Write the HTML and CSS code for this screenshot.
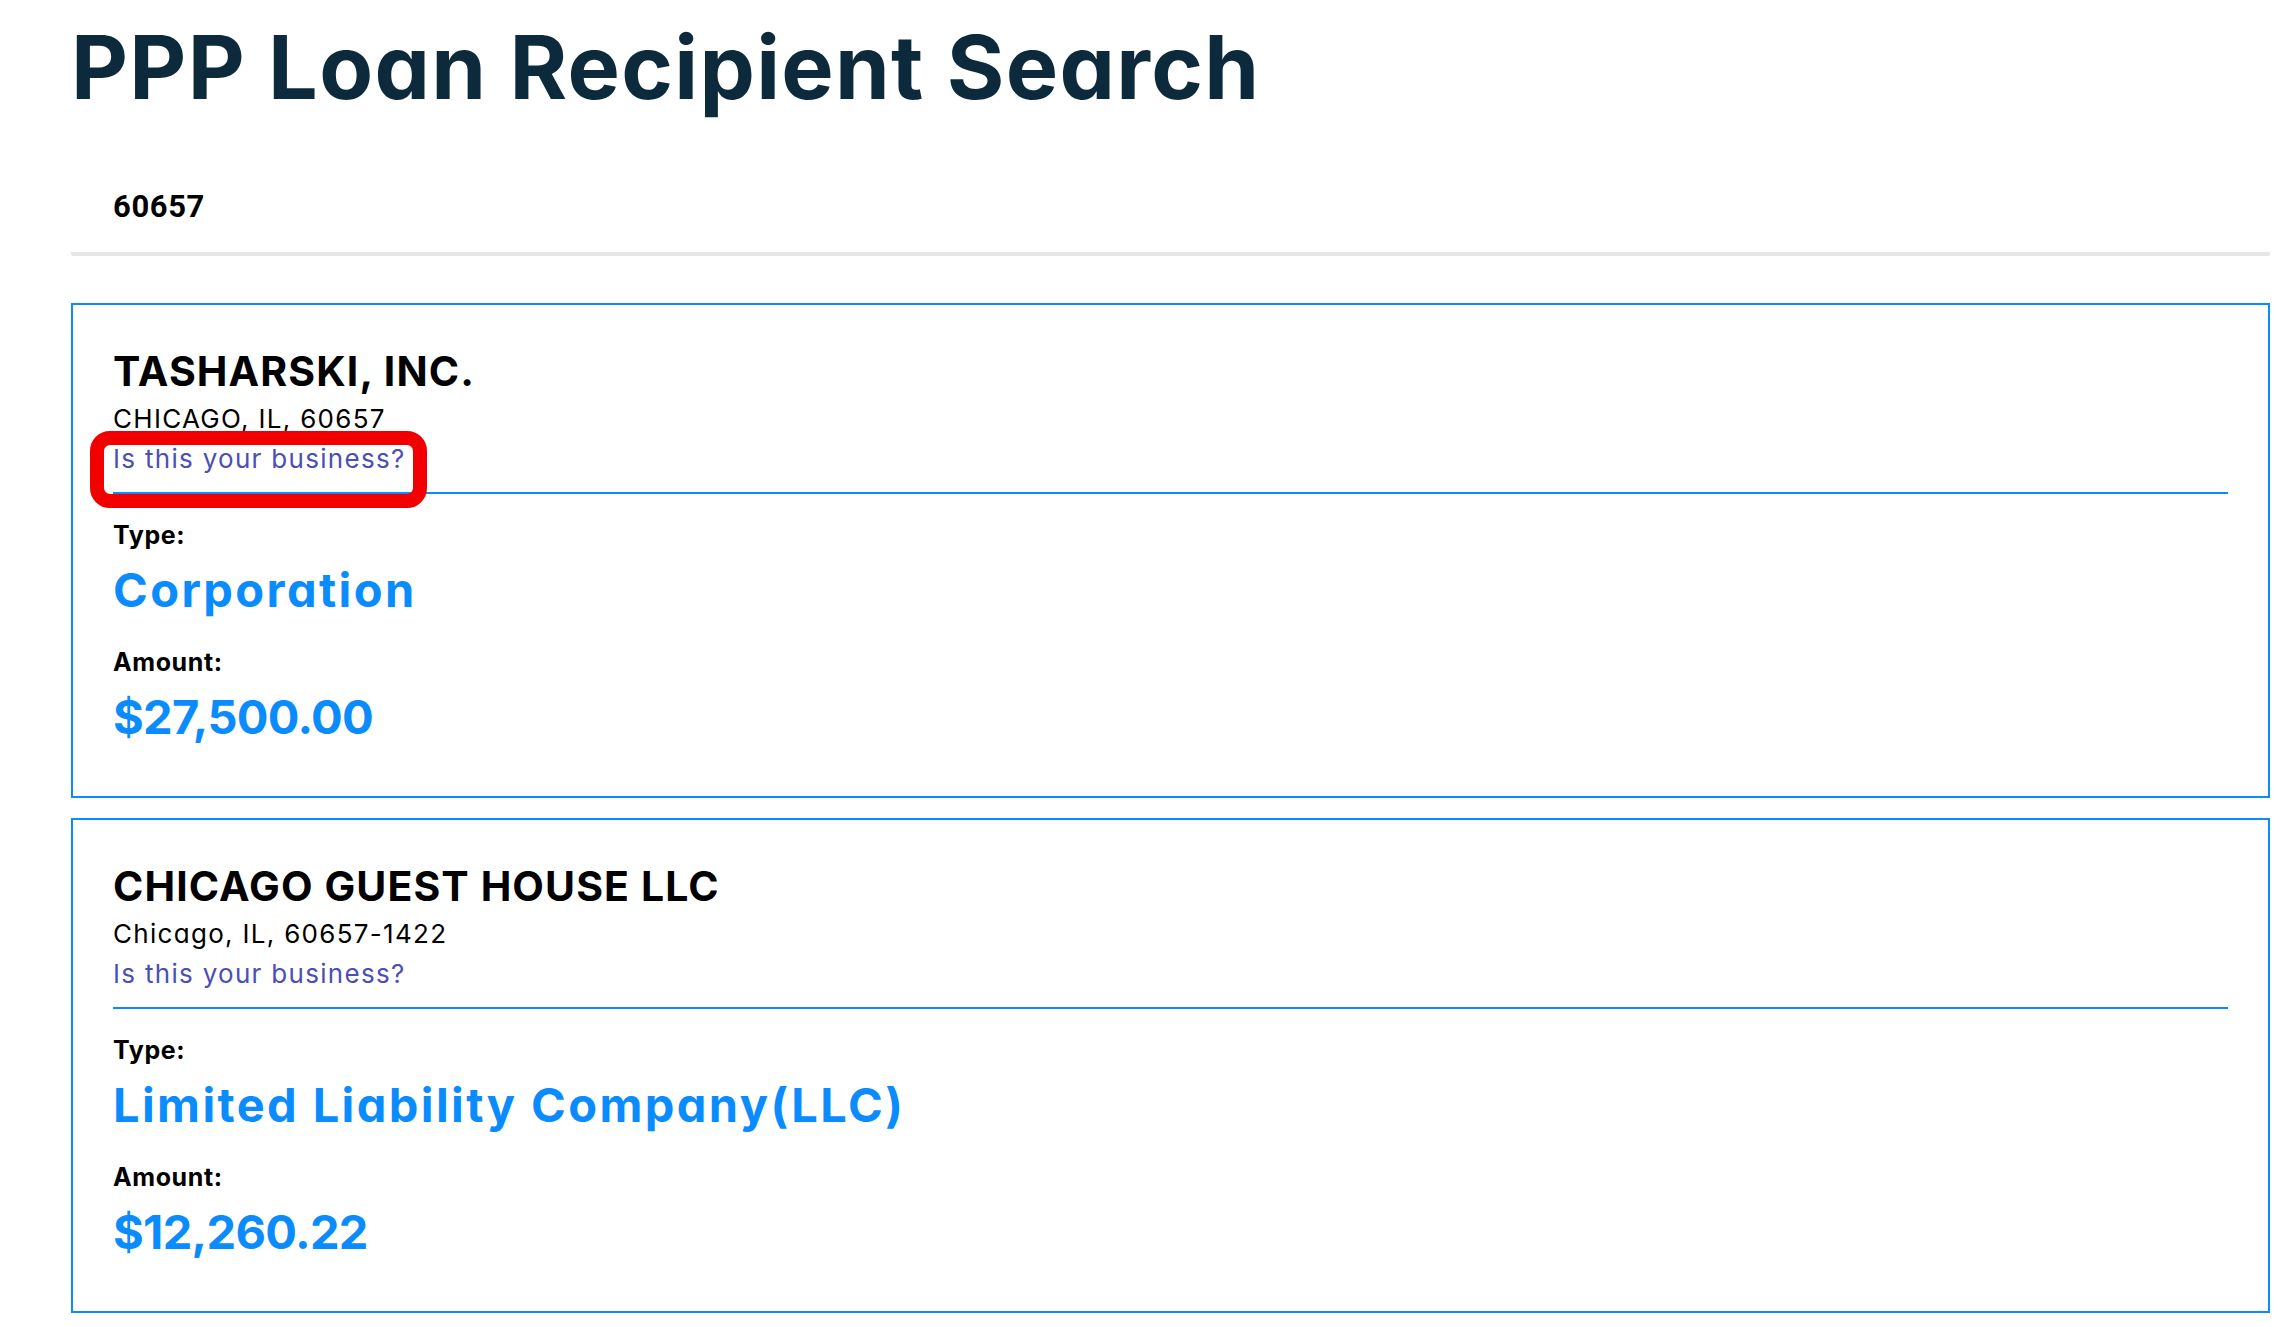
FILE: index.html
```html
<!DOCTYPE html>
<html lang="en">
<head>
    <meta charset="UTF-8" />
    <meta name="viewport" content="width=device-width, initial-scale=1.0" />
    <title>PPP Loan Recipient Search</title>
    <link rel="stylesheet" href="styles.css">
</head>
<body>
    <div class="page">
        <h1 class="page-title">PPP Loan Recipient Search</h1>
        <div class="search">
            <div class="search-value">60657</div>
        </div>
        <div class="results">
            <section class="result-card">
                <div class="card-head">
                    <h2 class="business-name">TASHARSKI, INC.</h2>
                    <div class="business-address">CHICAGO, IL, 60657</div>
                    <a href="#" class="claim-link">Is this your business?</a>
                </div>
                <div class="card-body">
                    <div class="field-label">Type:</div>
                    <div class="field-value">Corporation</div>
                    <div class="field-label">Amount:</div>
                    <div class="field-value amount">$27,500.00</div>
                </div>
                <div class="highlight"></div>
            </section>
            <section class="result-card">
                <div class="card-head">
                    <h2 class="business-name">CHICAGO GUEST HOUSE LLC</h2>
                    <div class="business-address">Chicago, IL, 60657-1422</div>
                    <a href="#" class="claim-link">Is this your business?</a>
                </div>
                <div class="card-body">
                    <div class="field-label">Type:</div>
                    <div class="field-value">Limited Liability Company(LLC)</div>
                    <div class="field-label">Amount:</div>
                    <div class="field-value amount">$12,260.22</div>
                </div>
            </section>
        </div>
    </div>
</body>
</html>
```

FILE: styles.css
```css
/* Reset and general styles */
* {
    box-sizing: border-box;
}
body {
    margin: 0;
    background: #fff;
    font-family: Inter, "Liberation Sans", sans-serif;
    font-feature-settings: "cv11";
    color: #000;
}
.page {
    margin: 0 24px 0 71px;
}

/* Title */
.page-title {
    margin: 0;
    padding-top: 14px;
    font-size: 88px;
    line-height: 106px;
    font-weight: 700;
    color: #0c2a3c;
    letter-spacing: 1.3px;
}

/* Search box */
.search {
    margin-top: 67px;
    padding: 0 0 25px 42px;
    border-bottom: 4px solid #e6e6e6;
    border-radius: 2px;
}
.search-value {
    font-family: Roboto, "Liberation Sans", sans-serif;
    font-weight: 700;
    font-size: 31px;
    line-height: 40px;
    letter-spacing: 0.6px;
}

/* Result cards */
.results {
    margin-top: 47px;
}
.result-card {
    position: relative;
    border: 2px solid #0a8cff;
    padding: 42px 40px 51px 40px;
    margin-bottom: 20px;
}
.card-head {
    border-bottom: 2px solid #0a8cff;
    padding-bottom: 18px;
}
.business-name {
    margin: 0;
    font-size: 41px;
    line-height: 49px;
    font-weight: 700;
    letter-spacing: 1.1px;
}
.business-address {
    margin-top: 8px;
    font-size: 26px;
    line-height: 30px;
    letter-spacing: 1.3px;
}
.claim-link {
    display: block;
    margin-top: 10px;
    font-size: 26px;
    line-height: 30px;
    letter-spacing: 1.3px;
    color: #4b4fb5;
    text-decoration: none;
}
.card-body {
    padding-top: 27px;
}
.field-label {
    font-size: 25px;
    line-height: 28px;
    font-weight: 700;
    letter-spacing: 0.6px;
}
.field-value {
    margin-top: 13px;
    margin-bottom: 30px;
    font-size: 47px;
    line-height: 56px;
    font-weight: 700;
    letter-spacing: 2.4px;
    color: #0a8cff;
}
.field-value.amount {
    margin-bottom: 0;
    letter-spacing: -0.7px;
}

/* Red annotation round the link */
.highlight {
    position: absolute;
    left: 17px;
    top: 126px;
    width: 337px;
    height: 77px;
    border: 14px solid #f20000;
    border-radius: 20px;
}
```
